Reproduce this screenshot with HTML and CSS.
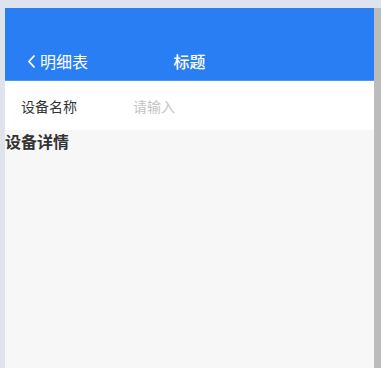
FILE: index.html
```html
<!DOCTYPE html>
<html lang="zh">
<head>
<meta charset="utf-8">
<link rel="stylesheet" href="styles.css">
</head>
<body>
<div class="shell">
  <div class="frame">
    <header class="navbar">
      <div class="nav-left">
        <svg class="chev" width="9" height="15" viewBox="0 0 9 15"><path d="M7.5 1.5 L2 7.5 L7.5 13.5" fill="none" stroke="#fff" stroke-width="1.8"/></svg>
        <span>明细表</span>
      </div>
      <div class="nav-title">标题</div>
    </header>
    <div class="field">
      <span class="label">设备名称</span>
      <span class="placeholder">请输入</span>
    </div>
    <h3 class="section">设备详情</h3>
  </div>
  <div class="scrollbar"></div>
</div>
</body>
</html>
```
FILE: styles.css
```css
html, body { margin: 0; padding: 0; }
body {
  background: #dfe3ee;
  width: 381px;
  height: 368px;
  overflow: hidden;
  font-family: "Noto Sans CJK SC", "Noto Sans", sans-serif;
}
.shell {
  display: flex;
  padding: 8px 0 0 5px;
  height: 360px;
}
.frame {
  flex: 1;
  background: #f7f7f7;
  display: flex;
  flex-direction: column;
}
.scrollbar {
  width: 7px;
  background: #bcbcbc;
}
.navbar {
  height: 73px;
  background: #2a7ef3;
  border-bottom: 1px solid #4f95f5;
  box-sizing: border-box;
  position: relative;
  color: #fff;
  display: flex;
  align-items: flex-end;
}
.nav-left {
  display: flex;
  align-items: center;
  gap: 4px;
  padding: 0 0 8px 22px;
  font-size: 16px;
  line-height: 22px;
}
.chev { display: block; }
.nav-title {
  position: absolute;
  left: 0; right: 0; bottom: 8px;
  text-align: center;
  font-size: 16px;
  line-height: 22px;
  font-weight: 500;
}
.field {
  background: #fff;
  height: 49px;
  display: flex;
  align-items: center;
  padding-left: 16px;
  font-size: 14px;
}
.label { color: #333; width: 112px; }
.placeholder { color: #c4c4c4; }
.section {
  margin: 0;
  font-size: 16px;
  font-weight: bold;
  color: #333;
  line-height: 22px;
}
```
